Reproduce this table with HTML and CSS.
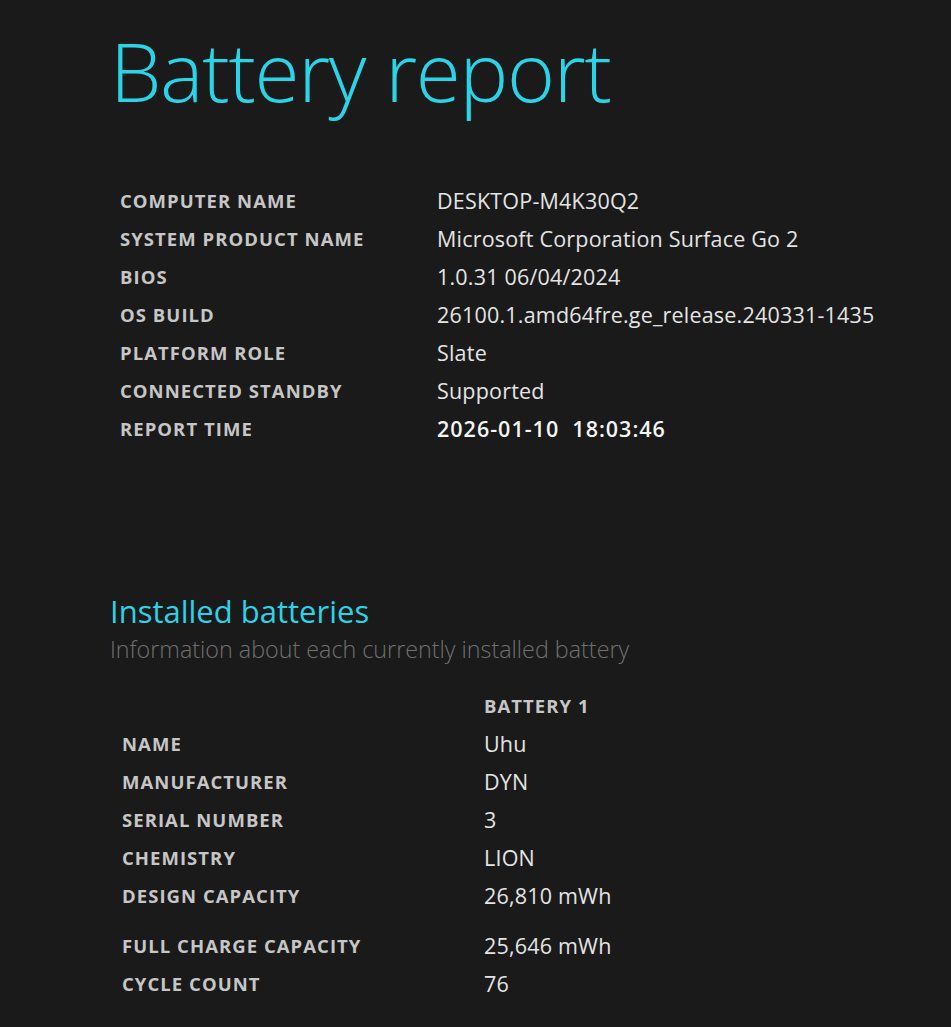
FILE: index.html
```html
<!DOCTYPE html>
<html>
<head>
<meta charset="utf-8">
<link rel="stylesheet" href="styles.css">
<title>Battery report</title>
</head>
<body>
<div class="page">
  <h1 class="title">Battery report</h1>
  <div class="info">
    <div class="label">COMPUTER NAME</div><div class="value">DESKTOP-M4K30Q2</div>
    <div class="label">SYSTEM PRODUCT NAME</div><div class="value">Microsoft Corporation Surface Go 2</div>
    <div class="label">BIOS</div><div class="value">1.0.31 06/04/2024</div>
    <div class="label">OS BUILD</div><div class="value">26100.1.amd64fre.ge_release.240331-1435</div>
    <div class="label">PLATFORM ROLE</div><div class="value">Slate</div>
    <div class="label">CONNECTED STANDBY</div><div class="value">Supported</div>
    <div class="label">REPORT TIME</div><div class="value strong">2026-01-10&nbsp; 18:03:46</div>
  </div>

  <h2 class="section">Installed batteries</h2>
  <div class="subtitle">Information about each currently installed battery</div>

  <div class="batteries">
    <div class="label"></div><div class="colhead">BATTERY 1</div>
    <div class="label">NAME</div><div class="value">Uhu</div>
    <div class="label">MANUFACTURER</div><div class="value">DYN</div>
    <div class="label">SERIAL NUMBER</div><div class="value">3</div>
    <div class="label">CHEMISTRY</div><div class="value">LION</div>
    <div class="label">DESIGN CAPACITY</div><div class="value">26,810 mWh</div>
    <div class="label spaced">FULL CHARGE CAPACITY</div><div class="value spaced">25,646 mWh</div>
    <div class="label">CYCLE COUNT</div><div class="value">76</div>
  </div>
</div>
</body>
</html>
```

FILE: styles.css
```css
html, body {
  margin: 0;
  padding: 0;
  background: #1a1a1a;
}
body {
  font-family: "Open Sans", "Noto Sans", sans-serif;
  color: #e6e6e6;
}
.page {
  padding: 20px 0 0 110px;
}
.title {
  margin: 0;
  font-weight: 300;
  font-size: 82px;
  line-height: 100px;
  color: #2bd3e6;
  letter-spacing: -1.3px;
}
.info {
  display: grid;
  grid-template-columns: 317px auto;
  margin: 61px 0 0 10px;
}
.batteries {
  display: grid;
  grid-template-columns: 362px auto;
  margin: 24px 0 0 12px;
}
.label,
.value,
.colhead {
  height: 38px;
  display: flex;
  align-items: center;
  box-sizing: border-box;
}
.label,
.colhead {
  font-size: 18.5px;
  font-weight: 700;
  color: #c6c6c6;
  letter-spacing: 1.05px;
}
.value {
  font-size: 21.5px;
  font-weight: 400;
  color: #e4e4e4;
  letter-spacing: 0.2px;
}
.value.strong {
  font-weight: 600;
  color: #f4f4f4;
  letter-spacing: 1px;
}
.section {
  margin: 148px 0 0 0;
  font-size: 31px;
  font-weight: 500;
  color: #2bd3e6;
  line-height: 32px;
}
.subtitle {
  margin-top: 9px;
  font-size: 23.3px;
  font-weight: 300;
  color: #707070;
  line-height: 26px;
}
.spaced {
  height: 50px;
  padding-top: 12px;
}
```
